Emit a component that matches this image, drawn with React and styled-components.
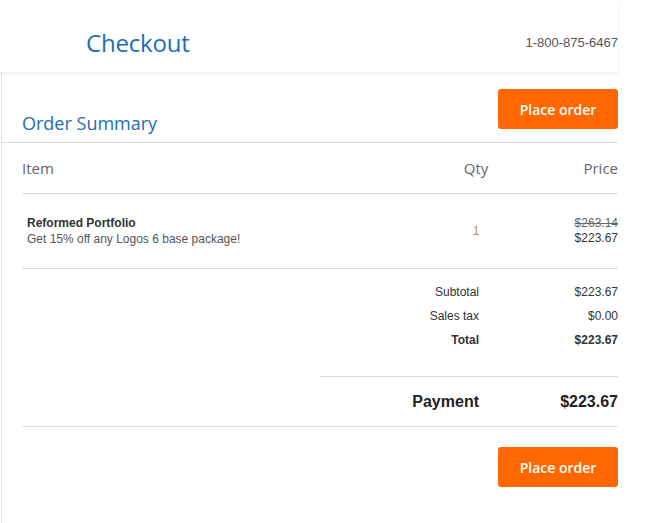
import React from "react";
import styled, { createGlobalStyle } from "styled-components";

const Global = createGlobalStyle`
  html, body { margin: 0; padding: 0; background: #fff; }
  body { font-family: "Liberation Sans", Arial, sans-serif; color: #333; }
`;

const Page = styled.div`
  width: 618px;
`;

const Header = styled.header`
  height: 72px;
  box-sizing: border-box;
  padding: 12px 0 0 86px;
  display: flex;
  align-items: center;
  justify-content: space-between;
  background: #fff;
  box-shadow: 0 2px 4px rgba(0, 0, 0, 0.07);
  position: relative;
  z-index: 1;
`;

const Brand = styled.h1`
  margin: 0;
  font-family: "Open Sans", sans-serif;
  font-weight: 400;
  font-size: 24px;
  letter-spacing: -0.2px;
  color: #1b6db6;
`;

const Phone = styled.span`
  font-family: "Liberation Sans", Arial, sans-serif;
  font-size: 13px;
  color: #555;
`;

const Panel = styled.main`
  margin-left: 1px;
  border-left: 1px solid #e2e2e2;
  padding-bottom: 36px;
`;

const TitleRow = styled.div`
  display: flex;
  align-items: flex-end;
  justify-content: space-between;
  padding: 17px 0 13px 20px;
  border-bottom: 1px solid #dedede;
`;

const Title = styled.h2`
  margin: 0 0 -6px;
  font-family: "Open Sans", sans-serif;
  font-weight: 400;
  font-size: 18px;
  color: #1b6db6;
`;

const OrderButton = styled.button`
  width: 120px;
  height: 40px;
  border: 0;
  border-radius: 3px;
  background: #ff6700;
  color: #fff;
  font-family: "Open Sans", sans-serif;
  font-weight: 600;
  font-size: 14px;
  cursor: pointer;
  padding: 0;
`;

const Body = styled.div`
  padding-left: 20px;
`;

const Row = styled.div`
  display: grid;
  grid-template-columns: 1fr 60px 112px;
  align-items: center;
  height: ${(p) => p.$h}px;
  border-bottom: 1px solid #dedede;
`;

const HeadCell = styled.div`
  font-family: "Open Sans", sans-serif;
  font-size: 15px;
  color: #666;
  text-align: ${(p) => p.$align || "left"};
`;

const ItemInfo = styled.div`
  padding-left: 5px;
  font-size: 12px;
  line-height: 16px;
`;

const ItemName = styled.div`
  font-weight: 700;
  color: #333;
`;

const ItemNote = styled.div`
  color: #555;
`;

const Qty = styled.div`
  text-align: center;
  font-size: 12px;
  color: #cc8a2b;
`;

const PriceCell = styled.div`
  text-align: right;
  font-size: 12px;
  line-height: 15px;
  color: #333;
`;

const OldPrice = styled.div`
  text-decoration: line-through;
  color: #666;
`;

const Totals = styled.div`
  margin-left: 298px;
  padding: 11px 0 24px;
  border-bottom: 1px solid #dedede;
`;

const TotalLine = styled.div`
  display: grid;
  grid-template-columns: 159px 139px;
  height: 24px;
  align-items: center;
  font-size: 12px;
  font-weight: ${(p) => (p.$bold ? 700 : 400)};
  color: #333;
  & > span { text-align: right; }
`;

const PaymentRow = styled.div`
  display: grid;
  grid-template-columns: 1fr 139px;
  height: 49px;
  align-items: center;
  border-bottom: 1px solid #dedede;
  font-size: 16px;
  font-weight: 700;
  color: #222;
  & > span { text-align: right; }
`;

const Footer = styled.div`
  display: flex;
  justify-content: flex-end;
  padding-top: 20px;
`;

export default function App() {
  return (
    <Page>
      <Global />
      <Header>
        <Brand>Checkout</Brand>
        <Phone>1-800-875-6467</Phone>
      </Header>
      <Panel>
        <TitleRow>
          <Title>Order Summary</Title>
          <OrderButton>Place order</OrderButton>
        </TitleRow>
        <Body>
          <Row $h={50}>
            <HeadCell>Item</HeadCell>
            <HeadCell $align="center">Qty</HeadCell>
            <HeadCell $align="right">Price</HeadCell>
          </Row>
          <Row $h={74}>
            <ItemInfo>
              <ItemName>Reformed Portfolio</ItemName>
              <ItemNote>Get 15% off any Logos 6 base package!</ItemNote>
            </ItemInfo>
            <Qty>1</Qty>
            <PriceCell>
              <OldPrice>$263.14</OldPrice>
              <div>$223.67</div>
            </PriceCell>
          </Row>
          <Totals>
            <TotalLine><span>Subtotal</span><span>$223.67</span></TotalLine>
            <TotalLine><span>Sales tax</span><span>$0.00</span></TotalLine>
            <TotalLine $bold><span>Total</span><span>$223.67</span></TotalLine>
          </Totals>
          <PaymentRow>
            <span>Payment</span>
            <span>$223.67</span>
          </PaymentRow>
          <Footer>
            <OrderButton>Place order</OrderButton>
          </Footer>
        </Body>
      </Panel>
    </Page>
  );
}
